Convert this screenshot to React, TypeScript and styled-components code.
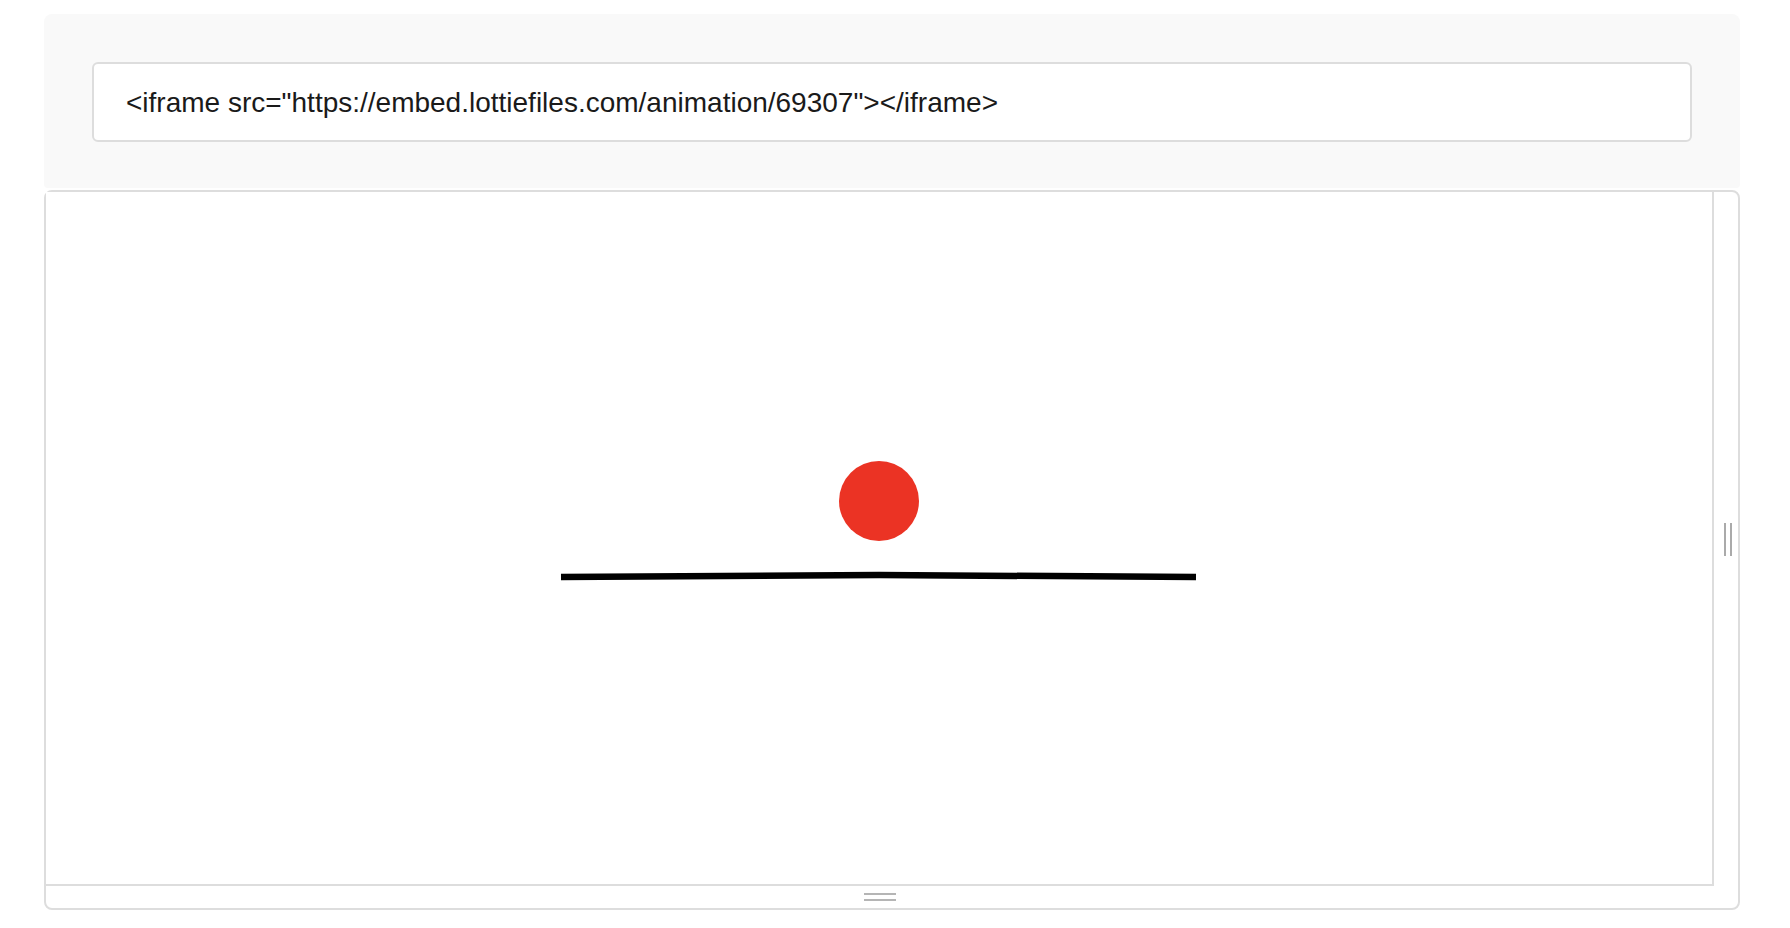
import React from "react";
import styled, { createGlobalStyle } from "styled-components";

const Global = createGlobalStyle`
  html, body {
    margin: 0;
    padding: 0;
    background: #ffffff;
    font-family: "Liberation Sans", Arial, sans-serif;
  }
`;

const Page = styled.div`
  width: 1696px;
  padding: 14px 0 0 44px;
  display: flex;
  flex-direction: column;
  gap: 2px;
`;

const CodePanel = styled.div`
  background: #f9f9f9;
  border-radius: 8px 8px 4px 4px;
  padding: 48px 48px 46px 48px;
`;

const CodeField = styled.div`
  height: 80px;
  box-sizing: border-box;
  border: 2px solid #dddddd;
  border-radius: 6px;
  background: #ffffff;
  display: flex;
  align-items: center;
  padding: 1px 32px 0 32px;
  font-family: "Liberation Sans", Arial, sans-serif;
  font-size: 28px;
  color: #1a1a1a;
  white-space: nowrap;
`;

const Frame = styled.div`
  box-sizing: border-box;
  border: 2px solid #dddddd;
  border-radius: 8px;
  display: grid;
  grid-template-columns: 1fr 24px;
  grid-template-rows: 694px 22px;
`;

const Viewport = styled.div`
  border-right: 2px solid #dddddd;
  border-bottom: 2px solid #dddddd;
  background: #ffffff;
  display: flex;
`;

const SideHandle = styled.div`
  display: flex;
  align-items: center;
  justify-content: center;
  padding: 0 0 0 4px;
  gap: 4px;
`;

const BottomHandle = styled.div`
  display: flex;
  flex-direction: column;
  align-items: center;
  justify-content: center;
  gap: 4px;
`;

const GripLine = styled.span<{ $vertical?: boolean }>`
  display: block;
  background: ${(p) => (p.$vertical ? "#aaaaaa" : "#b5b5b5")};
  width: ${(p) => (p.$vertical ? "2px" : "32px")};
  height: ${(p) => (p.$vertical ? "33px" : "2px")};
`;

const Scene = styled.svg`
  width: 100%;
  height: 100%;
  display: block;
`;

export default function App() {
  return (
    <>
      <Global />
      <Page>
        <CodePanel>
          <CodeField>
            {'<iframe src="https://embed.lottiefiles.com/animation/69307"></iframe>'}
          </CodeField>
        </CodePanel>
        <Frame>
          <Viewport>
            <Scene viewBox="0 0 1666 692" preserveAspectRatio="xMidYMid meet">
              <circle cx="833" cy="309" r="40" fill="#eb3324" />
              <path
                d="M515 385 Q 673 383.5 833 383 Q 991 383.5 1150 385"
                stroke="#000000"
                strokeWidth="6.5"
                fill="none"
              />
            </Scene>
          </Viewport>
          <SideHandle>
            <GripLine $vertical />
            <GripLine $vertical />
          </SideHandle>
          <BottomHandle>
            <GripLine />
            <GripLine />
          </BottomHandle>
          <div />
        </Frame>
      </Page>
    </>
  );
}
